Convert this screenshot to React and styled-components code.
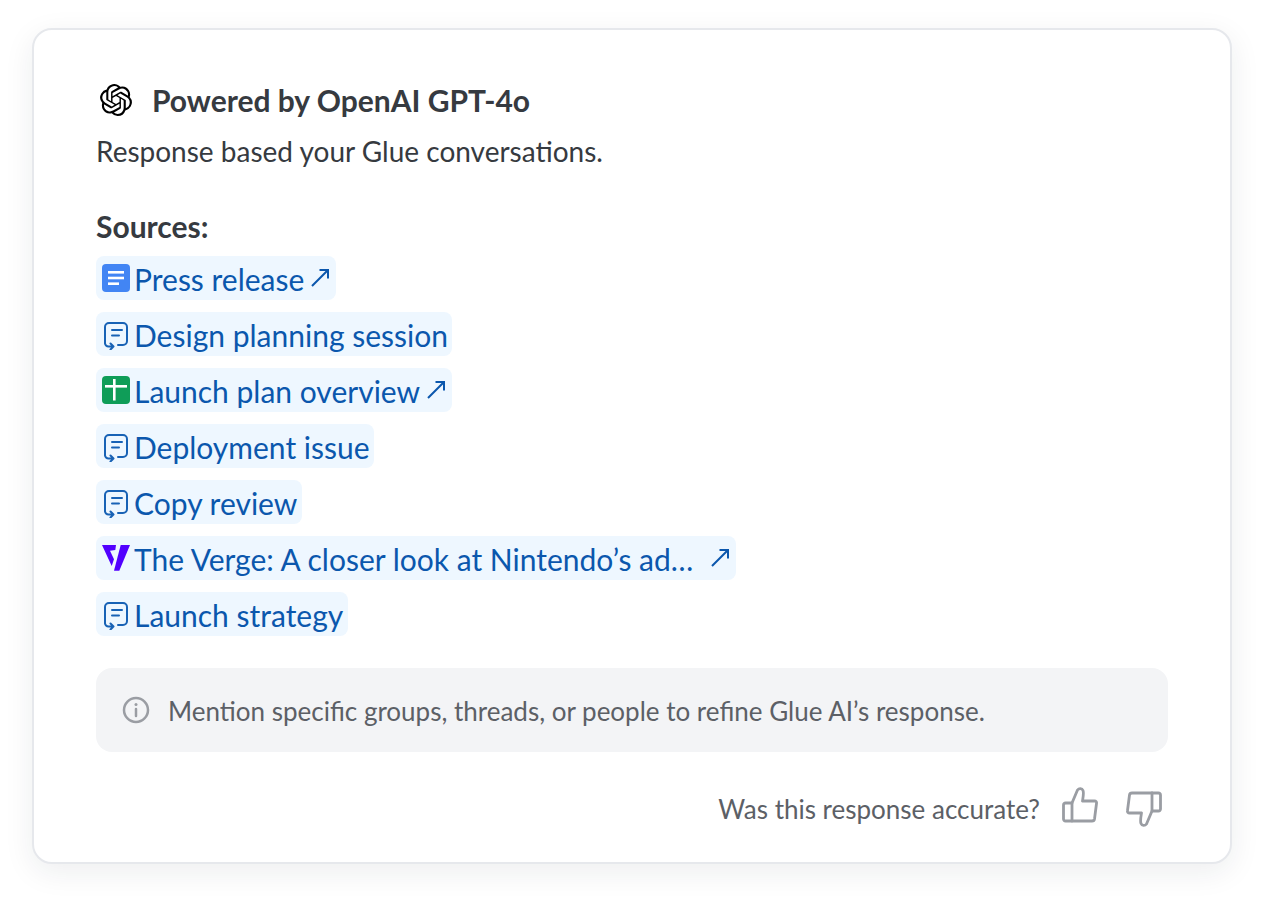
import React from 'react'
import styled, { createGlobalStyle } from 'styled-components'
import { SiOpenai } from 'react-icons/si'

const GlobalStyle = createGlobalStyle`
  body {
    margin: 0;
    background: #fff;
    font-family: Lato, "Open Sans", sans-serif;
    font-feature-settings: "liga" 1;
  }
`

const Page = styled.div`
  box-sizing: border-box;
  min-height: 900px;
  padding: 28px 32px 0 32px;
`

const Card = styled.div`
  box-sizing: border-box;
  width: 1200px;
  height: 836px;
  padding: 50px 62px 0 62px;
  background: #fff;
  border: 2px solid #e6e8ec;
  border-radius: 20px;
  box-shadow: 0 8px 30px rgba(29, 33, 45, 0.08);
`

const Header = styled.div`
  display: flex;
  align-items: center;
  gap: 20px;
  height: 40px;
  padding-left: 4px;
  color: #363a40;
  font-size: 30px;
  font-weight: 700;
  svg { color: #000; flex: none; }
`

const Subtitle = styled.div`
  margin-top: 11px;
  height: 40px;
  line-height: 40px;
  color: #363a40;
  font-size: 28px;
`

const SourcesLabel = styled.div`
  margin-top: 35px;
  height: 40px;
  line-height: 40px;
  color: #363a40;
  font-size: 30px;
  font-weight: 700;
`

const SourceList = styled.div`
  display: flex;
  flex-direction: column;
  align-items: flex-start;
  gap: 12px;
  margin-top: 10px;
`

const Chip = styled.div`
  box-sizing: border-box;
  display: flex;
  align-items: center;
  height: 44px;
  padding: 1px 4.5px 0 4px;
  gap: 2px;
  background: #eef7ff;
  border-radius: 8px;
  color: #0b57ad;
  font-size: 30px;
`

const IconSlot = styled.span`
  display: flex;
  flex: none;
  width: 32px;
  height: 32px;
  margin-top: -1px;
  align-items: center;
  justify-content: center;
`

const ThreadSvg = styled.svg`
  flex: none;
  margin-top: 4px;
`

const ChipArrow = styled.svg`
  flex: none;
  margin-left: ${p => p.$gap || 4}px;
  margin-right: 1.5px;
  margin-bottom: 1px;
`

const Hint = styled.div`
  box-sizing: border-box;
  display: flex;
  align-items: center;
  gap: 18px;
  height: 84px;
  margin-top: 32px;
  padding: 2px 0 0 26px;
  background: #f3f4f6;
  border-radius: 16px;
  color: #5c6066;
  font-size: 26px;
`

const HintIcon = styled.svg`
  flex: none;
  margin-top: -2px;
`

const Footer = styled.div`
  display: flex;
  align-items: flex-start;
  justify-content: flex-end;
  margin-top: 35px;
  padding-right: 6px;
  color: #5c6066;
  font-size: 26px;
`

const FooterLabel = styled.span`
  margin-top: 6px;
`

const ThumbButton = styled.span`
  display: flex;
  margin-left: ${p => p.$gap}px;
  margin-top: ${p => p.$top || 0}px;
`

const FlippedThumb = styled.svg`
  transform: rotate(180deg);
`

const DocIcon = () => (
  <svg width="28" height="28" viewBox="0 0 28 28">
    <rect width="28" height="28" rx="4" fill="#4285f4" />
    <rect x="6" y="7" width="16" height="2.6" fill="#fff" />
    <rect x="6" y="12.7" width="16" height="2.6" fill="#fff" />
    <rect x="6" y="18.4" width="11" height="2.6" fill="#fff" />
  </svg>
)

const SheetIcon = () => (
  <svg width="28" height="28" viewBox="0 0 28 28">
    <rect width="28" height="28" rx="4" fill="#0f9d58" />
    <rect x="3" y="9" width="22" height="2.6" fill="#fff" />
    <rect x="11" y="3" width="2.6" height="21.5" fill="#fff" />
  </svg>
)

const ThreadIcon = () => (
  <ThreadSvg width="24" height="28" viewBox="0 0 24 28" fill="none" stroke="#1862b5" strokeWidth="2" strokeLinecap="round" strokeLinejoin="round">
    <path d="M1 21V5A4 4 0 0 1 5 1H19A4 4 0 0 1 23 5V19A4 4 0 0 1 19 23H14" />
    <path d="M8 8H18M8 13.5H15" />
    <path d="M1 21A3.500 3.500 0 0 0 4.500 24.500H9.500M6.500 21.500L9.500 24.500L6.500 27.500" />
  </ThreadSvg>
)

const VergeIcon = () => (
  <svg width="28" height="28" viewBox="0 0 28 28">
    <path d="M0 1H14L13.300 6L8 6.700L12 15.300L9.700 22Z" fill="#5200ff" />
    <path d="M18.700 1H28L17.300 26.700H12Z" fill="#5200ff" />
  </svg>
)

const ExternalArrow = ({ gap }) => (
  <ChipArrow $gap={gap} width="20" height="20" viewBox="0 0 20 20" fill="none" stroke="#0b57ad" strokeWidth="2">
    <path d="M2 18L18 2M9.500 2H18V10.500" />
  </ChipArrow>
)

const InfoIcon = () => (
  <HintIcon width="28" height="28" viewBox="0 0 28 28" fill="none" stroke="#9a9da3" strokeWidth="2.500" strokeLinecap="round">
    <circle cx="14" cy="14" r="12" />
    <path d="M14 13V20" />
    <path d="M14 8.500V8.600" strokeWidth="3" />
  </HintIcon>
)

const thumbPaths = (
  <>
    <path d="M10 34H3.500A2 2 0 0 1 1.500 32V18A2 2 0 0 1 3.500 16H10Z" />
    <path d="M10 16L15.500 3C17 1 20 1 21 3.500C22 6 21 11 20.500 14H32.500C34 14 34.800 15 34.500 16.500L32.500 32C32.300 33.300 31.300 34 30 34H10" />
  </>
)

const thumbProps = {
  width: 36,
  height: 36,
  viewBox: '0 0 36 36',
  fill: 'none',
  stroke: '#9a9da3',
  strokeWidth: 2.8,
  strokeLinejoin: 'round',
  strokeLinecap: 'round',
}

const ThumbUp = () => <svg {...thumbProps}>{thumbPaths}</svg>

const ThumbDown = () => <FlippedThumb {...thumbProps}>{thumbPaths}</FlippedThumb>

const sources = [
  { icon: <DocIcon />, label: 'Press release', external: true },
  { icon: <ThreadIcon />, label: 'Design planning session' },
  { icon: <SheetIcon />, label: 'Launch plan overview', external: true },
  { icon: <ThreadIcon />, label: 'Deployment issue' },
  { icon: <ThreadIcon />, label: 'Copy review' },
  { icon: <VergeIcon />, label: 'The Verge: A closer look at Nintendo’s ad…', external: true, gap: 15 },
  { icon: <ThreadIcon />, label: 'Launch strategy' },
]

export default function App() {
  return (
    <Page>
      <GlobalStyle />
      <Card>
        <Header>
          <SiOpenai size={32} />
          Powered by OpenAI GPT-4o
        </Header>
        <Subtitle>Response based your Glue conversations.</Subtitle>
        <SourcesLabel>Sources:</SourcesLabel>
        <SourceList>
          {sources.map(s => (
            <Chip key={s.label}>
              <IconSlot>{s.icon}</IconSlot>
              {s.label}
              {s.external && <ExternalArrow gap={s.gap} />}
            </Chip>
          ))}
        </SourceList>
        <Hint>
          <InfoIcon />
          Mention specific groups, threads, or people to refine Glue AI’s response.
        </Hint>
        <Footer>
          <FooterLabel>Was this response accurate?</FooterLabel>
          <ThumbButton $gap={22}><ThumbUp /></ThumbButton>
          <ThumbButton $gap={28} $top={4}><ThumbDown /></ThumbButton>
        </Footer>
      </Card>
    </Page>
  )
}
